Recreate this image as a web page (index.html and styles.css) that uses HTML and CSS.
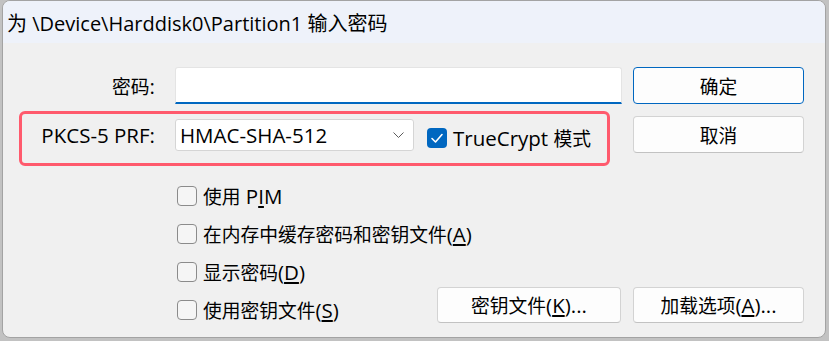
FILE: index.html
```html
<!DOCTYPE html>
<html lang="zh-CN">
<head>
<meta charset="utf-8">
<title>输入密码</title>
<link rel="stylesheet" href="styles.css">
</head>
<body>
<div class="window">
  <div class="titlebar">为 \Device\Harddisk0\Partition1 输入密码</div>
  <div class="content">
    <div class="main">
      <div class="row">
        <span class="label"><span class="zh">密码</span>:</span>
        <div class="input"></div>
      </div>
      <div class="row row-prf">
        <span class="label">PKCS-5 PRF:</span>
        <div class="select">
          <span>HMAC-SHA-512</span>
          <svg class="chevron" width="11" height="6" viewBox="0 0 11 6"><polyline points="0.5,0.5 5.5,5.5 10.5,0.5" fill="none" stroke="#5c5c5c" stroke-width="1"/></svg>
        </div>
        <div class="check check-tc">
          <span class="box checked"><svg width="20" height="20" viewBox="0 0 20 20"><polyline points="5,10.5 8.5,14 15,6.5" fill="none" stroke="#fff" stroke-width="1.6" stroke-linecap="round" stroke-linejoin="round"/></svg></span>
          <span>TrueCrypt <span class="zh">模式</span></span>
        </div>
      </div>
      <div class="options">
        <div class="check"><span class="box"></span><span><span class="zh">使用</span> P<u>I</u>M</span></div>
        <div class="check"><span class="box"></span><span><span class="zh">在内存中缓存密码和密钥文件</span>(<u>A</u>)</span></div>
        <div class="check"><span class="box"></span><span><span class="zh">显示密码</span>(<u>D</u>)</span></div>
        <div class="last-row">
          <div class="check"><span class="box"></span><span><span class="zh">使用密钥文件</span>(<u>S</u>)</span></div>
          <button class="btn btn-keyfiles"><span class="zh">密钥文件</span>(<u>K</u>)...</button>
        </div>
      </div>
    </div>
    <div class="side">
      <button class="btn btn-default"><span class="zh">确定</span></button>
      <button class="btn btn-cancel"><span class="zh">取消</span></button>
      <button class="btn btn-mount"><span class="zh">加载选项</span>(<u>A</u>)...</button>
    </div>
  </div>
  <div class="highlight"></div>
</div>
</body>
</html>
```

FILE: styles.css
```css
html {
  background: #c2c2c2;
}

body {
  margin: 0;
  font-family: "Open Sans", "Noto Sans CJK SC", sans-serif;
  font-size: 20.5px;
  color: #000;
}

.zh {
  font-family: "Noto Sans CJK SC", sans-serif;
  font-size: 18.75px;
}

.window {
  position: relative;
  box-sizing: border-box;
  width: 824px;
  height: 338px;
  margin-left: 2px;
  border: 1px solid #a3a3a3;
  border-radius: 8px;
  background: #f0f0f0;
  overflow: hidden;
  display: flex;
  flex-direction: column;
}

.titlebar {
  flex: none;
  height: 42px;
  background: #eef2fa;
  font-family: "Open Sans", "Noto Sans CJK SC", sans-serif;
  font-size: 20px;
  padding-left: 4px;
  display: flex;
  align-items: center;
  white-space: nowrap;
}

.content {
  display: flex;
  gap: 11px;
  padding: 24px 21px 0 0;
}

.main {
  width: 619px;
  display: flex;
  flex-direction: column;
}

.row {
  display: flex;
  align-items: center;
  height: 37px;
}

.row-prf {
  margin-top: 12px;
}

.label {
  width: 152px;
  margin-right: 20px;
  text-align: right;
  white-space: nowrap;
}

.input {
  box-sizing: border-box;
  width: 447px;
  height: 37px;
  background: #fff;
  border: 1px solid #e4e4e4;
  border-bottom: 2px solid #0067c0;
  border-radius: 3px 3px 0 0;
}

.select {
  box-sizing: border-box;
  width: 239px;
  height: 32px;
  display: flex;
  align-items: center;
  justify-content: space-between;
  padding: 0 9px 0 4px;
  background: #fff;
  border: 1px solid #d5d5d5;
  border-radius: 3px;
}

.check {
  display: flex;
  align-items: center;
  gap: 6px;
  height: 38px;
  white-space: nowrap;
}

.check-tc {
  margin-left: 13px;
  margin-top: 6px;
}

.box {
  box-sizing: border-box;
  flex: none;
  width: 20px;
  height: 20px;
  border: 1px solid #8b8b8b;
  border-radius: 4px;
  background: #f5f5f5;
}

.box.checked {
  border: none;
  background: #0067c0;
}

.box svg {
  display: block;
}

.options {
  margin-top: 24px;
  padding-left: 174px;
  display: flex;
  flex-direction: column;
}

.last-row {
  display: flex;
  align-items: flex-start;
}

.btn {
  box-sizing: border-box;
  width: 171px;
  height: 37px;
  padding: 0;
  font: inherit;
  color: #000;
  background: #fdfdfd;
  border: 1px solid #d3d3d3;
  border-bottom-color: #c2c2c2;
  border-radius: 4px;
}

.btn-default {
  border-color: #0067c0;
}

.btn-keyfiles {
  width: 184px;
  height: 36px;
  margin: -4px 1px 0 auto;
}

.side {
  width: 171px;
  display: flex;
  flex-direction: column;
}

.btn-cancel {
  margin-top: 12px;
}

.btn-mount {
  height: 36px;
  margin-top: 134px;
}

.highlight {
  position: absolute;
  left: 16px;
  top: 110px;
  width: 591px;
  height: 55px;
  box-sizing: border-box;
  border: 3px solid #ff5a6d;
  border-radius: 6px;
  pointer-events: none;
}
```
